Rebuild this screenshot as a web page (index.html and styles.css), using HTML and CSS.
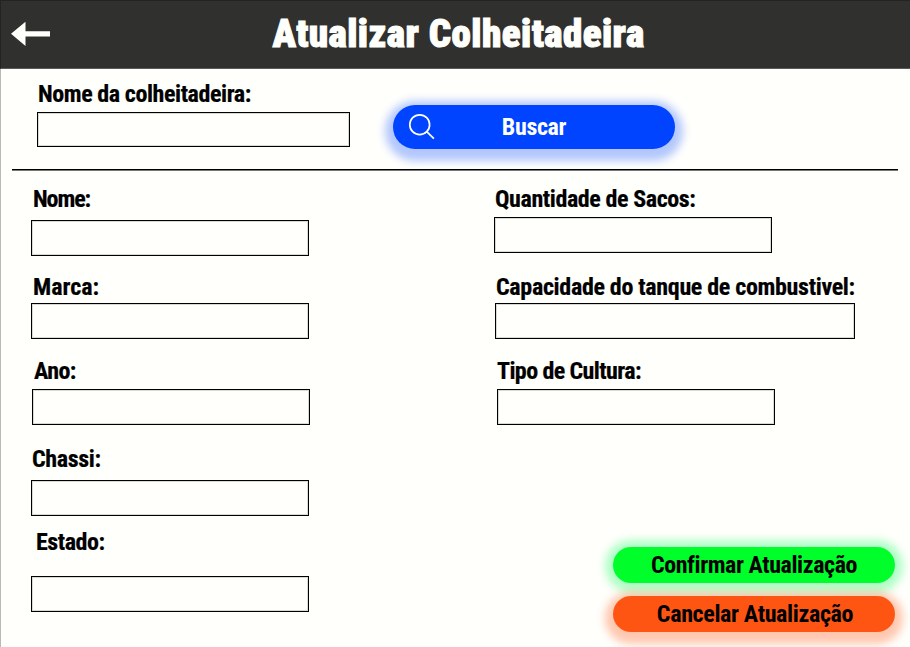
FILE: index.html
```
<!DOCTYPE html>
<html lang="pt-BR">
<head>
<meta charset="utf-8">
<title>Atualizar Colheitadeira</title>
<link rel="stylesheet" href="styles.css">
</head>
<body>
<div class="page">
  <header class="topbar">
    <a class="back" href="#" aria-label="Voltar"><svg width="40" height="26" viewBox="0 0 40 26"><path d="M0 12.8 14.5 .8v9.4H39v5.3H14.5v9.4z" fill="#fffffb"/></svg></a>
    <h1>Atualizar Colheitadeira</h1>
  </header>
  <section class="search">
    <div class="field lookup"><label for="busca">Nome da colheitadeira:</label><input id="busca"></div>
    <button class="pill buscar"><svg width="28" height="28" viewBox="0 0 28 28" fill="none" stroke="#fff" stroke-width="1.7"><circle cx="11.7" cy="11.7" r="9.9"/><path d="m18.7 18.7 7.2 7"/></svg><span>Buscar</span></button>
  </section>
  <hr>
  <main class="form">
    <div class="col">
      <div class="field nome"><label for="nome">Nome:</label><input id="nome"></div>
      <div class="field marca"><label for="marca">Marca:</label><input id="marca"></div>
      <div class="field ano"><label for="ano">Ano:</label><input id="ano"></div>
      <div class="field chassi"><label for="chassi">Chassi:</label><input id="chassi"></div>
      <div class="field estado"><label for="estado">Estado:</label><input id="estado"></div>
    </div>
    <div class="col side">
      <div class="field sacos"><label for="sacos">Quantidade de Sacos:</label><input id="sacos"></div>
      <div class="field tanque"><label for="tanque">Capacidade do tanque de combustivel:</label><input id="tanque"></div>
      <div class="field cultura"><label for="cultura">Tipo de Cultura:</label><input id="cultura"></div>
      <div class="actions">
        <button class="pill confirmar"><span>Confirmar Atualização</span></button>
        <button class="pill cancelar"><span>Cancelar Atualização</span></button>
      </div>
    </div>
  </main>
</div>
</body>
</html>
```
FILE: styles.css
```
* { box-sizing: border-box; }
body { margin: 0; background: #fffffc; color: #000; font: bold 24px/24px "Roboto Condensed", "Open Sans Condensed", Roboto, sans-serif; }
.page { width: 910px; height: 647px; overflow: hidden; display: flex; flex-direction: column; box-shadow: inset 1px 0 #b9b9b7; }

.topbar { flex: none; height: 69px; background: #30302e; border: 1px solid #232322; border-width: 1px 0 0 1px; border-bottom: 1px solid #5a5a58; display: grid; grid-template-columns: 260px 1fr 260px; align-items: center; padding-bottom: 2px; }
.back { display: flex; padding-left: 10px; }
h1 { margin: 0 -10px; padding-left: 6px; text-align: center; white-space: nowrap; color: #fffffb; font-size: 39px; line-height: 44px; font-weight: 900; letter-spacing: .45px; -webkit-text-stroke: 1px #fffffb; }

.search { flex: none; height: 100px; display: flex; align-items: flex-start; padding: 13px 0 0 37px; }
hr { flex: none; width: 886px; height: 2px; margin: 0 0 0 12px; border: 0; background: linear-gradient(#000 50%, #777 50%); }

.field { display: flex; flex-direction: column; align-items: flex-start; }
.field label { height: 24px; white-space: nowrap; letter-spacing: -.35px; -webkit-text-stroke: .2px #000; }
.field input { width: 278px; height: 36px; margin: 0; padding: 0 8px; border: 1px solid #000; border-radius: 0; background: transparent; box-shadow: inset 0 0 0 1px rgba(0, 0, 0, .15); font: inherit; outline: 0; }

.lookup input { width: 313px; height: 35px; margin-top: 6px; }
.lookup label { margin-left: 1px; letter-spacing: -.42px; }

.form { flex: 1; display: flex; padding: 16px 0 15px 31px; }
.col { width: 463px; display: flex; flex-direction: column; }
.side { width: 416px; }
.nome label { margin-left: 2px; letter-spacing: -1.1px; }
.nome input { margin-top: 9px; }
.marca { margin-top: 19px; }
.marca label { margin-left: 2px; letter-spacing: 0; }
.marca input { margin-top: 4px; }
.ano { margin-top: 20px; }
.ano label { margin-left: 3px; letter-spacing: -.6px; }
.ano input { margin: 6px 0 0 1px; }
.chassi { margin-top: 22px; }
.chassi label { margin-left: 1px; }
.chassi input { margin-top: 9px; }
.estado { margin-top: 14px; }
.estado label { margin-left: 5px; letter-spacing: -.45px; }
.estado input { margin-top: 22px; }

.sacos label { margin-left: 1px; letter-spacing: -.4px; }
.sacos input { margin-top: 6px; }
.tanque { margin-top: 22px; }
.tanque label { margin-left: 2px; letter-spacing: -.32px; }
.tanque input { width: 360px; margin: 4px 0 0 1px; }
.cultura { margin-top: 20px; }
.cultura label { margin-left: 3px; letter-spacing: -.6px; }
.cultura input { margin: 6px 0 0 3px; }

.pill { display: flex; align-items: center; justify-content: center; width: 282px; height: 36px; padding: 0; border: 0; border-radius: 22px; font: inherit; color: #000; letter-spacing: -.42px; }
.buscar { height: 44.5px; margin: 22.5px 0 0 43px; color: #fff; background: #0044ff; box-shadow: 0 4px 8px 8px rgba(0, 68, 255, .3); letter-spacing: -.35px; display: grid; grid-template-columns: 43px 1fr 43px; }
.buscar svg { margin-left: 15px; }
.actions { margin: auto 0 0 119px; display: flex; flex-direction: column; gap: 13.5px; }
.confirmar { background: #00ff2a; box-shadow: 0 1px 9px 8px rgba(0, 255, 80, .32); }
.cancelar { background: #ff5512; box-shadow: 0 4px 9px 8px rgba(255, 85, 18, .33); letter-spacing: -.35px; }
.cancelar span { margin-left: 2px; }
```
